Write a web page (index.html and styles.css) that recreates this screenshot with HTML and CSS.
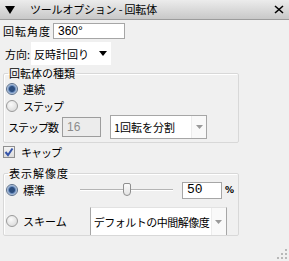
FILE: index.html
```html
<!DOCTYPE html>
<html>
<head>
<meta charset="utf-8">
<title>ツールオプション - 回転体</title>
<link rel="stylesheet" href="styles.css">
</head>
<body>
<div class="panel">
    <div class="titlebar">
        <svg class="tri" width="10" height="8" viewBox="0 0 10 8"><path d="M0 0H10L5 8Z" fill="#000"/></svg>
        <span class="title">ツールオプション - 回転体</span>
        <svg class="close" width="10" height="9" viewBox="0 0 10 9"><path d="M1 1L9 8M9 1L1 8" stroke="#000" stroke-width="1.6"/></svg>
    </div>

    <div class="row row-angle">
        <span class="lbl wide-lbl">回転角度</span>
        <span class="field angle">360°</span>
    </div>

    <div class="row row-dir">
        <span class="lbl">方向:</span>
        <span class="combo flat">反時計回り
            <svg class="arrow" width="8" height="5" viewBox="0 0 8 5"><path d="M0 0H8L4 5Z" fill="#000"/></svg>
        </span>
    </div>

    <fieldset class="group g1">
        <legend>回転体の種類</legend>
        <div class="opt"><span class="radio on"></span>連続</div>
        <div class="opt kana"><span class="radio"></span>ステップ</div>
        <div class="row row-steps">
            <span class="lbl steps">ステップ数</span>
            <span class="field num disabled">16</span>
            <span class="combo boxed">1回転を分割<span class="btn"><svg width="7" height="4" viewBox="0 0 7 4"><path d="M0 0H7L3.5 4Z" fill="#9a9a9a"/></svg></span></span>
        </div>
    </fieldset>

    <div class="opt cap kana"><span class="check"><svg width="10" height="10" viewBox="0 0 10 10"><path d="M1.5 5L4 8L8.5 1.5" stroke="#3554a8" stroke-width="2" fill="none"/></svg></span>キャップ</div>

    <fieldset class="group g2">
        <legend class="wide-lbl">表示解像度</legend>
        <div class="row row-std">
            <div class="opt"><span class="radio on"></span>標準</div>
            <div class="slider"><span class="track"></span><span class="thumb"></span></div>
            <span class="field pct">50</span>
            <span class="unit">%</span>
        </div>
        <div class="row row-scheme">
            <div class="opt"><span class="radio"></span>スキーム</div>
            <span class="combo boxed wide">デフォルトの中間解像度<span class="btn"><svg width="7" height="4" viewBox="0 0 7 4"><path d="M0 0H7L3.5 4Z" fill="#9a9a9a"/></svg></span></span>
        </div>
    </fieldset>

    <svg class="grip" width="11" height="11" viewBox="0 0 11 11">
        <g fill="#b8b8b8">
            <rect x="8" y="0" width="2" height="2"/>
            <rect x="4" y="4" width="2" height="2"/><rect x="8" y="4" width="2" height="2"/>
            <rect x="0" y="8" width="2" height="2"/><rect x="4" y="8" width="2" height="2"/><rect x="8" y="8" width="2" height="2"/>
        </g>
    </svg>
</div>
</body>
</html>
```

FILE: styles.css
```css
body {
    margin: 0;
    background: #f0f0f0;
    font-family: "Noto Sans CJK JP", sans-serif;
    font-size: 11px;
    color: #000;
    white-space: nowrap;
}
.panel {
    position: relative;
    width: 289px;
    height: 261px;
    overflow: hidden;
}
.titlebar {
    display: flex;
    align-items: center;
    height: 19px;
    padding: 0 5px;
    background: linear-gradient(#ececec, #c8c8c8);
    border-bottom: 1px solid #9c9c9c;
}
.title {
    margin-left: 15px;
    letter-spacing: -0.2px;
    line-height: 19px;
}
.close {
    margin-left: auto;
}
.row {
    display: flex;
    align-items: center;
}
.row > * {
    flex-shrink: 0;
}
.lbl {
    line-height: 14px;
}
.wide-lbl {
    letter-spacing: 1px;
}
.kana {
    letter-spacing: -1px;
}
.field {
    box-sizing: border-box;
    background: #fff;
    border: 1px solid #a6a6a6;
    padding: 0 4px;
    line-height: 14px;
    font-family: "Liberation Sans", sans-serif;
    font-size: 12px;
}
.row-angle {
    height: 16px;
    margin: 3px 0 0 3px;
}
.angle {
    width: 72px;
    height: 16px;
    margin-left: 2px;
}
.row-dir {
    height: 23px;
    margin: 3px 0 0 5px;
}
.combo {
    display: flex;
    align-items: center;
    box-sizing: border-box;
    background: #fff;
    padding-left: 3px;
    overflow: hidden;
}
.combo.flat {
    width: 80px;
    height: 23px;
    margin-left: 1px;
}
.combo.flat .arrow {
    margin-left: auto;
    margin-right: 4px;
}
.combo.boxed {
    border: 1px solid #a6a6a6;
    height: 24px;
    padding-right: 0;
}
.combo .btn {
    display: flex;
    align-items: center;
    justify-content: center;
    flex-shrink: 0;
    margin-left: auto;
    width: 14px;
    height: 22px;
    border-left: 1px solid #ececec;
    background: #f9f9f9;
}
.group {
    margin: 2px 0 0 3px;
    width: 236px;
    min-width: 0;
    box-sizing: border-box;
    border: 1px solid #d8d8d8;
    border-radius: 2px;
    box-shadow: inset 1px 1px 0 #fff;
    padding: 0 0 3px 2px;
}
.group legend {
    padding: 0 1px;
    margin-left: 2px;
    line-height: 13px;
}
.opt {
    display: flex;
    align-items: center;
    height: 17px;
}
.radio {
    flex-shrink: 0;
    box-sizing: border-box;
    width: 12px;
    height: 12px;
    margin-right: 5px;
    border-radius: 50%;
    border: 1px solid #9a9a9a;
    background: radial-gradient(circle at 40% 35%, #fafafa, #d4d4d4);
}
.radio.on {
    border-color: #5a6f8c;
    background: radial-gradient(circle, #2c4d7e 0 2.5px, #6d8fc0 3.5px, #c8d4e4 5px);
}
.row-steps {
    margin-top: 1px;
    height: 24px;
}
.steps {
    margin-left: 2px;
    letter-spacing: -1px;
}
.num {
    width: 39px;
    height: 20px;
    margin-left: 4px;
    line-height: 18px;
}
.disabled {
    background: #ececec;
    color: #8c8c8c;
    border-color: #9d9d9d;
}
.row-steps .combo {
    width: 97px;
    margin-left: 9px;
}
.cap {
    margin: 2px 0 0 3px;
    height: 14px;
}
.check {
    display: flex;
    align-items: center;
    justify-content: center;
    box-sizing: border-box;
    width: 12px;
    height: 12px;
    margin-right: 6px;
    border: 1px solid #8f8f8f;
    background: linear-gradient(#f4f4f4, #dcdcdc);
}
.g2 {
    margin-top: 8px;
    padding-bottom: 0;
}
.row-std {
    height: 20px;
}
.slider {
    position: relative;
    width: 93px;
    height: 14px;
    margin-left: 35px;
}
.track {
    position: absolute;
    left: 0;
    right: 0;
    top: 6px;
    height: 1px;
    background: #b5b5b5;
    border-bottom: 1px solid #fff;
}
.thumb {
    position: absolute;
    left: 43px;
    top: 0;
    box-sizing: border-box;
    width: 8px;
    height: 13px;
    border: 1px solid #8f8f8f;
    border-radius: 2px 2px 4px 4px;
    background: linear-gradient(#fbfbfb, #e3e3e3);
}
.pct {
    width: 40px;
    height: 17px;
    margin-left: 9px;
    font-family: "Liberation Mono", monospace;
    font-size: 13px;
}
.unit {
    margin-left: 3px;
    font-family: "DejaVu Sans", sans-serif;
    font-size: 9px;
    font-weight: bold;
}
.row-scheme {
    margin-top: 7px;
    height: 28px;
}
.combo.wide {
    width: 137px;
    height: 28px;
    margin-left: 23px;
    border-top: 1px solid #e2e2e2;
    border-left: 1px solid #a6a6a6;
    border-right: 1px solid #a6a6a6;
    border-bottom: 0;
    letter-spacing: -0.5px;
}
.combo.wide .btn {
    height: 27px;
}
.grip {
    position: absolute;
    right: 1px;
    bottom: 1px;
}
```
